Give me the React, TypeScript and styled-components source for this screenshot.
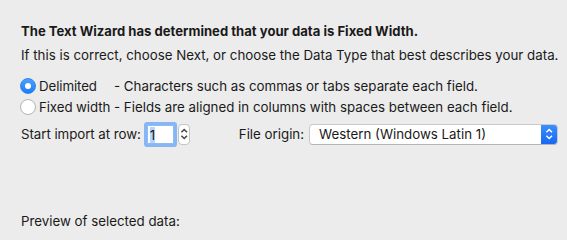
import styled, { createGlobalStyle } from 'styled-components';

const GlobalStyle = createGlobalStyle`
  html, body {
    margin: 0;
    padding: 0;
    background: #ececec;
  }
  body {
    font-family: Inter, "Noto Sans", "Liberation Sans", sans-serif;
    font-size: 13.3px;
    color: #1a1a1a;
  }
`;

const Panel = styled.div`
  width: 567px;
  height: 235px;
  padding: 23px 0 0 21px;
  box-sizing: border-box;
  display: flex;
  flex-direction: column;
`;

const Title = styled.div`
  font-weight: 700;
  font-size: 13.1px;
  line-height: 16px;
`;

const Hint = styled.div`
  margin-top: 8px;
  line-height: 16px;
`;

const TypeGrid = styled.div`
  margin-top: 15px;
  display: grid;
  grid-template-columns: 93px auto;
  row-gap: 5px;
`;

const RadioLabel = styled.label`
  display: flex;
  align-items: center;
  gap: 3px;
  height: 16px;
  margin-left: -1px;
  letter-spacing: -0.1px;
`;

const RadioDot = styled.span<{ checked?: boolean }>`
  width: 16px;
  height: 16px;
  box-sizing: border-box;
  border-radius: 50%;
  display: flex;
  align-items: center;
  justify-content: center;
  background: ${({ checked }) => (checked ? 'linear-gradient(#4aa0fb, #1d7df5)' : '#fff')};
  border: 1px solid ${({ checked }) => (checked ? '#2f86f4' : '#b4b4b4')};

  &::after {
    content: '';
    display: ${({ checked }) => (checked ? 'block' : 'none')};
    width: 6px;
    height: 6px;
    border-radius: 50%;
    background: #fff;
  }
`;

const Desc = styled.span`
  line-height: 16px;
`;

const ImportRow = styled.div`
  margin-top: 7px;
  display: flex;
  align-items: center;
  height: 24px;
`;

const Field = styled.div`
  display: flex;
  align-items: center;
  gap: 3px;
  letter-spacing: -0.05px;
`;

const RowInput = styled.div`
  margin-left: 3px;
  width: 27px;
  height: 19px;
  box-sizing: border-box;
  background: #fff;
  border: 1px solid #8fbbf5;
  box-shadow: 0 0 0 3px #86b7f4;
  border-radius: 1px;
  padding: 1px 0 0 2px;
  line-height: 16px;
`;

const Selected = styled.span`
  background: #b4d6fe;
`;

const Stepper = styled.div`
  margin-left: 4px;
  width: 12px;
  height: 21px;
  box-sizing: border-box;
  background: #fff;
  border: 1px solid #c4c4c4;
  border-radius: 4px;
  display: flex;
  align-items: center;
  justify-content: center;
`;

const Origin = styled.div`
  margin-left: 49px;
  display: flex;
  align-items: center;
  gap: 5px;
`;

const Select = styled.div`
  width: 249px;
  height: 21px;
  box-sizing: border-box;
  display: flex;
  background: #fff;
  border: 1px solid #c9c9c9;
  border-bottom-color: #b5b5b5;
  border-radius: 4px;
  overflow: hidden;
`;

const SelectText = styled.div`
  flex: 1;
  padding-left: 9px;
  line-height: 19px;
`;

const SelectArrow = styled.div`
  width: 16px;
  display: flex;
  align-items: center;
  justify-content: center;
  background: linear-gradient(#3c8ffc, #1767f2);
`;

const Preview = styled.div`
  margin-top: 67px;
  line-height: 16px;
`;

function Chevrons({ color, size }: { color: string; size: number }) {
  return (
    <svg width={size * 0.6} height={size} viewBox="0 0 6 10">
      <path d="M1 3.8 L3 1.8 L5 3.8" fill="none" stroke={color} strokeWidth="1.1" />
      <path d="M1 6.2 L3 8.2 L5 6.2" fill="none" stroke={color} strokeWidth="1.1" />
    </svg>
  );
}

export default function App() {
  const types = [
    ['Delimited', '- Characters such as commas or tabs separate each field.', true],
    ['Fixed width', '- Fields are aligned in columns with spaces between each field.', false],
  ] as const;

  return (
    <>
      <GlobalStyle />
      <Panel>
        <Title>The Text Wizard has determined that your data is Fixed Width.</Title>
        <Hint>If this is correct, choose Next, or choose the Data Type that best describes your data.</Hint>
        <TypeGrid>
          {types.map(([label, desc, checked]) => [
            <RadioLabel key={label}>
              <RadioDot checked={checked} />
              {label}
            </RadioLabel>,
            <Desc key={desc}>{desc}</Desc>,
          ])}
        </TypeGrid>
        <ImportRow>
          <Field>
            Start import at row:
            <RowInput>
              <Selected>1</Selected>
            </RowInput>
          </Field>
          <Stepper>
            <Chevrons color="#444" size={14} />
          </Stepper>
          <Origin>
            File origin:
            <Select>
              <SelectText>Western (Windows Latin 1)</SelectText>
              <SelectArrow>
                <Chevrons color="#fff" size={14} />
              </SelectArrow>
            </Select>
          </Origin>
        </ImportRow>
        <Preview>Preview of selected data:</Preview>
      </Panel>
    </>
  );
}
